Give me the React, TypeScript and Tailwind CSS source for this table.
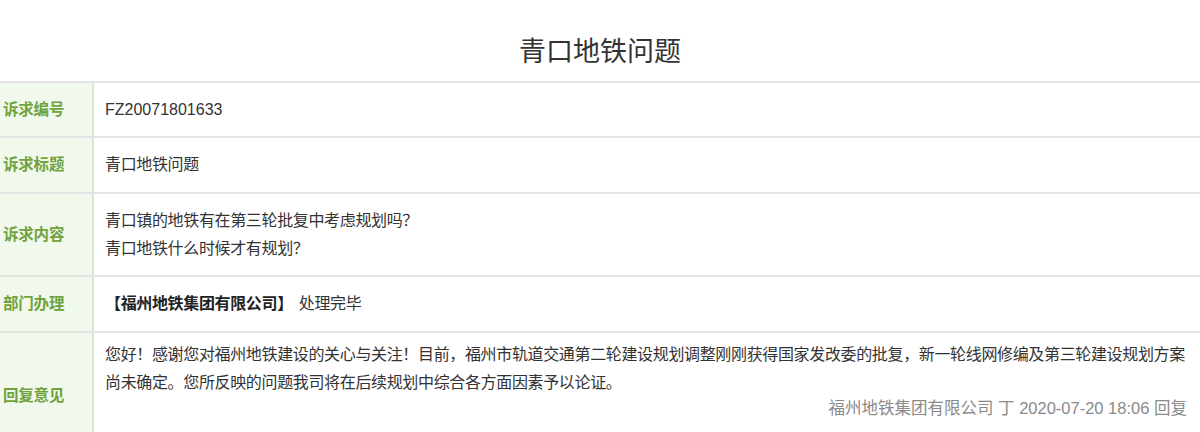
const font = { fontFamily: '"Liberation Sans", "Noto Sans CJK SC", sans-serif' }

function Row({ label, h, children }: { label: string; h: string; children: React.ReactNode }) {
  return (
    <div className={`flex border-b-2 border-[#e4e4e4] ${h}`}>
      <div className="w-[94px] shrink-0 flex items-center px-[3px] bg-[#f1f8ec] border-r-2 border-[#dfe5dc]">
        <span className="text-[15.5px] font-bold text-[#6fa33d] tracking-[-0.2px]">{label}</span>
      </div>
      <div className="flex-1 flex items-center pl-[11px] pr-[12px] text-[16px] leading-[28px] text-[#333] tracking-[-0.35px]">
        {children}
      </div>
    </div>
  )
}

export default function App() {
  return (
    <div className="w-[1200px] h-[432px] overflow-hidden bg-white" style={font}>
      {/* title */}
      <div className="h-[81px] pt-[36px] text-center">
        <h1 className="text-[27px] leading-[32px] text-[#333] font-normal">青口地铁问题</h1>
      </div>

      {/* detail table */}
      <div className="border-t-2 border-[#e4e4e4]">
        <Row label="诉求编号" h="h-[55px]">
          <span className="tracking-normal">FZ20071801633</span>
        </Row>
        <Row label="诉求标题" h="h-[56px]">
          青口地铁问题
        </Row>
        <Row label="诉求内容" h="h-[83px]">
          <div>
            <p>青口镇的地铁有在第三轮批复中考虑规划吗？</p>
            <p>青口地铁什么时候才有规划？</p>
          </div>
        </Row>
        <Row label="部门办理" h="h-[56px]">
          <span className="font-bold text-[#222]">【福州地铁集团有限公司】</span>
          <span className="ml-[6px]">处理完毕</span>
        </Row>
        <div className="flex h-[126px]">
          <div className="w-[94px] shrink-0 flex items-center px-[3px] bg-[#f1f8ec] border-r-2 border-[#dfe5dc]">
            <span className="text-[15.5px] font-bold text-[#6fa33d] tracking-[-0.2px]">回复意见</span>
          </div>
          <div className="flex-1 pl-[11px] pr-[12px] pt-[8px] text-[16px] leading-[28px] text-[#333]">
            <p className="tracking-[-0.35px]">
              您好！感谢您对福州地铁建设的关心与关注！目前，福州市轨道交通第二轮建设规划调整刚刚获得国家发改委的批复，新一轮线网修编及第三轮建设规划方案尚未确定。您所反映的问题我司将在后续规划中综合各方面因素予以论证。
            </p>
            <p className="text-right text-[16.5px] leading-[22px] text-[#8a8a8a] pr-[1px]">
              福州地铁集团有限公司 丁 2020-07-20 18:06 回复
            </p>
          </div>
        </div>
      </div>
    </div>
  )
}
